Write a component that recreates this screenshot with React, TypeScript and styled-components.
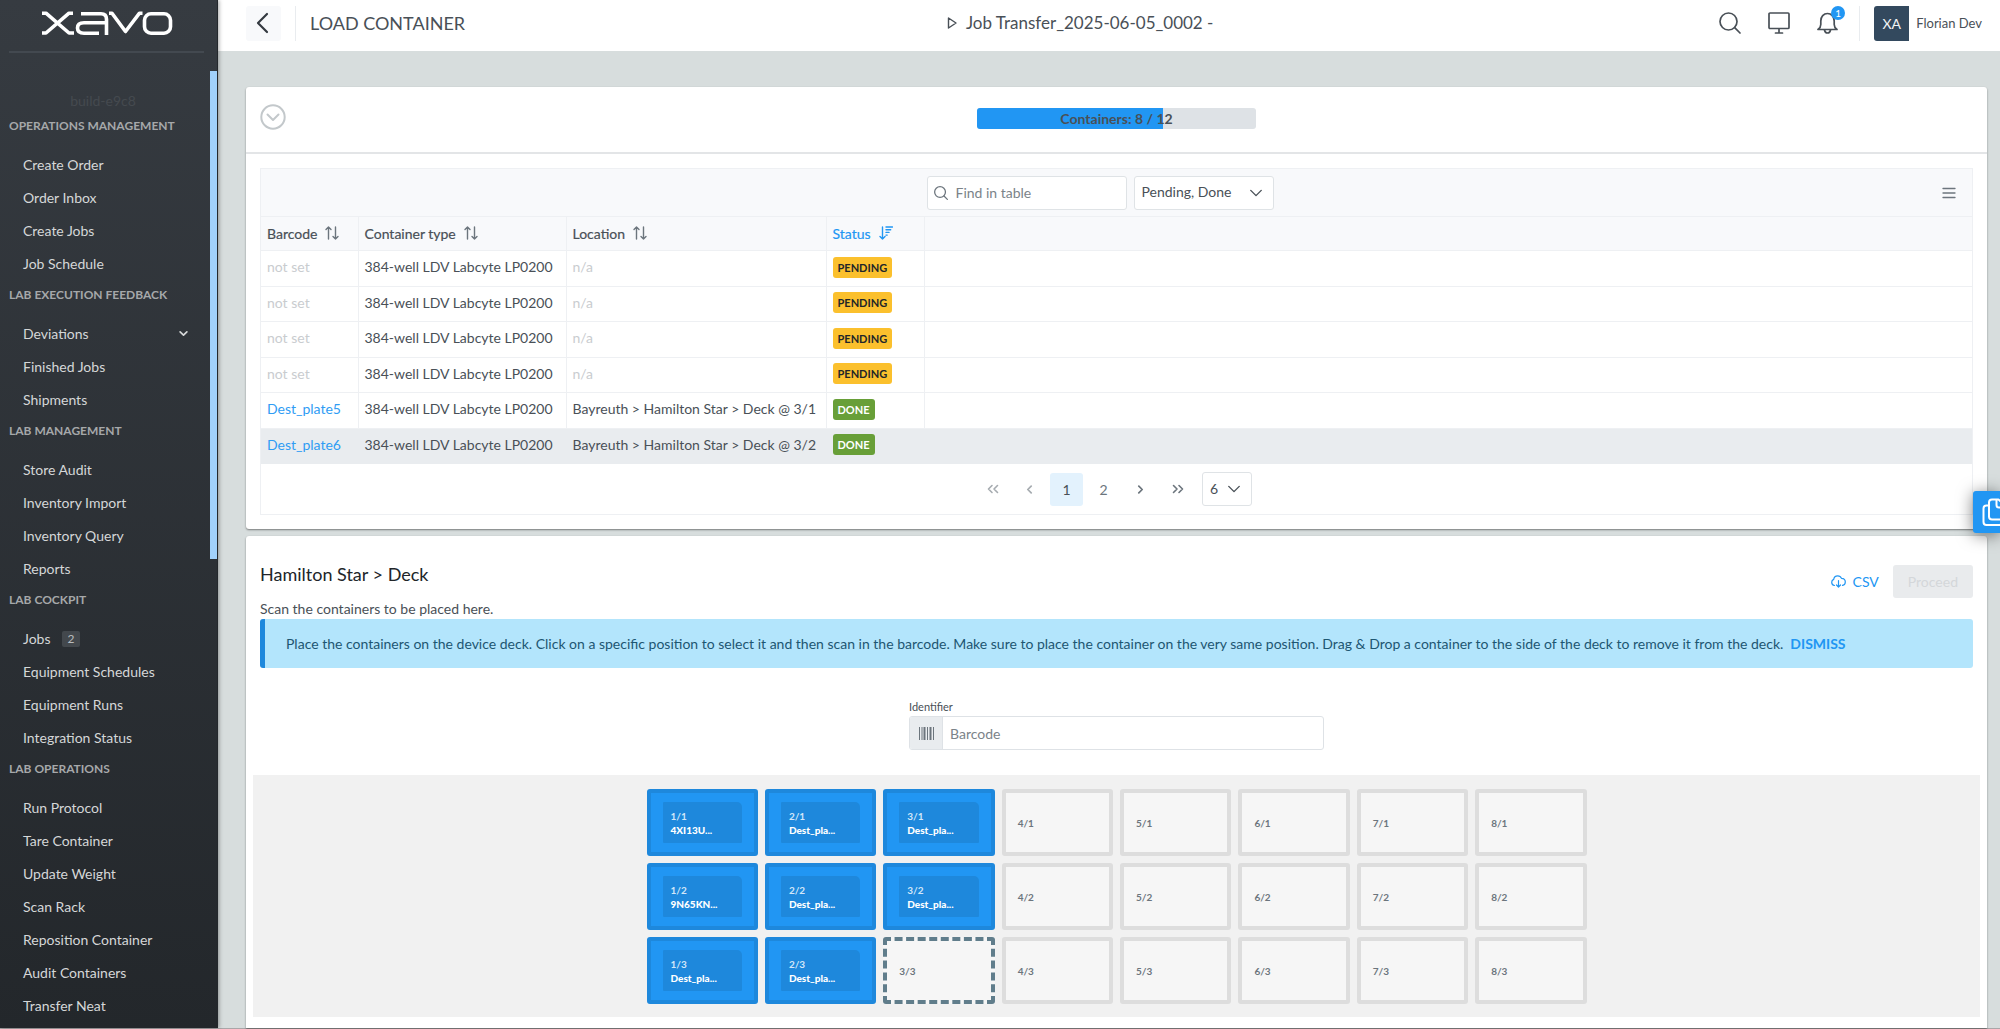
import React from 'react';
import styled, { createGlobalStyle } from 'styled-components';

const Global = createGlobalStyle`
  *, *::before, *::after { box-sizing: border-box; }
  body { margin: 0; background: #d7dddd; }
  body, button, input, select {
    font-family: Lato, "Open Sans", sans-serif;
    font-size: 14px;
    color: #495057;
  }
  h1, h2, h3, p, ul { margin: 0; padding: 0; font-weight: 400; }
  ul { list-style: none; }
  a { text-decoration: none; color: inherit; }
  button { background: none; border: 0; padding: 0; cursor: pointer; }
  svg { display: block; flex: none; }
`;

/* ---------- shell ---------- */

const Shell = styled.div`
  display: grid;
  grid-template-columns: 218px minmax(0, 1fr);
  min-height: 100vh;
  border-bottom: 1px solid #a9a6a8;
`;

const Sidebar = styled.aside`
  display: flex;
  flex-direction: column;
  background: linear-gradient(#363b41, #23272b);
  border-right: 1px solid #24282c;
  box-shadow: 1px 0 4px rgba(0, 0, 0, 0.35);
  z-index: 1;
`;

const Brand = styled.a`
  display: flex;
  justify-content: center;
  padding: 11px 0 16px;
  margin: 0 13px 18px 9px;
  border-bottom: 2px solid #434950;
`;

const MenuArea = styled.div`
  flex: 1;
  display: flex;
`;

const Menu = styled.nav`
  flex: 1;
  padding-top: 20px;
`;

const Build = styled.p`
  text-align: center;
  line-height: 20px;
  padding-right: 4px;
  color: #454a4f;
`;

const ScrollTrack = styled.div`
  width: 7px;
`;

const ScrollThumb = styled.div`
  height: 51%;
  background: #a1d1fb;
`;

const GroupTitle = styled.h3`
  padding: 0 9px 8px;
  font-size: 12px;
  font-weight: 700;
  line-height: 29px;
  color: #a6a8aa;
`;

const MenuLink = styled.a`
  display: flex;
  align-items: center;
  gap: 11px;
  height: 33px;
  padding: 0 22px 0 23px;
  color: #d5d7d8;

  svg { margin-left: auto; }
`;

const Count = styled.span`
  padding: 0 6px;
  border-radius: 2px;
  font-size: 12px;
  line-height: 16px;
  background: #43484d;
  color: #b9bcbe;
`;

const Content = styled.div`
  display: flex;
  flex-direction: column;
  min-width: 0;
`;

const TopBar = styled.header`
  display: flex;
  align-items: center;
  justify-content: space-between;
  height: 51px;
  padding: 0 18px 5px 28px;
  background: #fff;
`;

const TopLeft = styled.div`
  display: flex;
  align-items: center;
  gap: 14px;
`;

const BackButton = styled.button`
  display: grid;
  place-items: center;
  width: 35px;
  height: 35px;
  padding-right: 3px;
  border-radius: 3px;
  background: #f8f9fb;
`;

const Rule = styled.span`
  width: 1px;
  height: 35px;
  background: #e9ecef;
`;

const PageTitle = styled.h1`
  font-size: 18px;
  line-height: 24px;
`;

const JobTitle = styled.div`
  display: flex;
  align-items: center;
  gap: 9px;
  padding-right: 24px;
  font-size: 17px;
  line-height: 24px;
`;

const TopRight = styled.div`
  display: flex;
  align-items: center;
  gap: 27px;
`;

const IconButton = styled.button`
  position: relative;
  display: grid;
  place-items: center;
`;

const Alert = styled.span`
  position: absolute;
  top: -6px;
  right: -7px;
  width: 14px;
  border-radius: 7px;
  font-size: 10px;
  line-height: 14px;
  text-align: center;
  background: #2196f3;
  color: #fff;
`;

const User = styled.div`
  display: flex;
  align-items: center;
  gap: 7px;
  font-size: 13px;

  ${Rule} { margin: 0 7px 0 -6px; }
`;

const Avatar = styled.span`
  width: 35px;
  border-radius: 3px 0 0 3px;
  font-size: 14px;
  line-height: 35px;
  text-align: center;
  background: #33495e;
  color: #f1f3f5;
`;

const Main = styled.main`
  flex: 1;
  display: flex;
  flex-direction: column;
  gap: 7px;
  padding: 36px 13px 0 28px;
`;

const Card = styled.section`
  background: #fff;
  border-radius: 3px;
  box-shadow: 0 1px 2px rgba(0, 0, 0, 0.45);
`;

const DeckCard = styled(Card)`
  flex: 1;
  display: flex;
  flex-direction: column;
  padding: 29px 7px 11px;
  border-radius: 3px 3px 0 0;
`;

/* ---------- container list ---------- */

const CardHeader = styled.div`
  display: grid;
  grid-template-columns: 1fr 279px 1fr;
  align-items: center;
  height: 67px;
  padding: 0 14px 2px;
  border-bottom: 2px solid #e3e5e7;
`;

const Collapse = styled.button`
  justify-self: start;
  padding-bottom: 4px;
`;

const Progress = styled.div`
  display: grid;
  border-radius: 3px;
  overflow: hidden;
  background: #dee2e6;

  > * { grid-area: 1 / 1; }
`;

const ProgressFill = styled.div`
  background: #2196f3;
`;

const ProgressLabel = styled.span`
  font-weight: 700;
  line-height: 21px;
  text-align: center;
`;

const TableFrame = styled.div`
  margin: 14px;
  border: 1px solid #eef0f3;
`;

const Toolbar = styled.div`
  display: grid;
  grid-template-columns: 1fr 33px;
  align-items: center;
  height: 47px;
  background: #f8f9fb;
`;

const ToolbarButton = styled.button`
  padding: 0 3px;
`;

const Filters = styled.div`
  display: flex;
  justify-content: center;
  gap: 7px;
`;

const SearchBox = styled.label`
  display: flex;
  align-items: center;
  gap: 8px;
  width: 200px;
  height: 34px;
  padding: 0 6px;
  border: 1px solid #dfe3e6;
  border-radius: 3px;
  background: #fff;
  color: #6c757d;
`;

const BareInput = styled.input`
  flex: 1;
  min-width: 0;
  padding: 0;
  border: 0;
  outline: 0;
  background: none;

  &::placeholder { color: #7b8389; opacity: 1; }
`;

const SelectBox = styled.label<{ $width: number }>`
  display: grid;
  align-items: center;
  width: ${p => p.$width}px;
  height: 34px;
  border: 1px solid #dfe3e6;
  border-radius: 3px;
  background: #fff;

  > * { grid-area: 1 / 1; }
  > svg { justify-self: end; margin-right: 10px; pointer-events: none; }
`;

const BareSelect = styled.select`
  appearance: none;
  width: 100%;
  height: 100%;
  padding: 0 7px 2px;
  border: 0;
  outline: 0;
  background: none;
`;

const Table = styled.table`
  width: 100%;
  height: 248px;
  border-collapse: collapse;
`;

const Th = styled.th<{ $width?: number; $active?: boolean }>`
  width: ${p => (p.$width ? p.$width + 'px' : 'auto')};
  height: 34px;
  padding: 0 6px 1px;
  border: 1px solid #eef0f3;
  border-left-width: 0;
  font-weight: 400;
  text-align: left;
  background: #f8f9fb;
  color: ${p => (p.$active ? '#2196f3' : '#495057')};

  &:last-child { border-right-width: 0; }
`;

const SortButton = styled.button`
  display: flex;
  align-items: center;
  gap: 8px;
  color: inherit;
  font-weight: 400;
  -webkit-text-stroke: 0.2px;
`;

const Row = styled.tr<{ $selected?: boolean }>`
  background: ${p => (p.$selected ? '#e9ecef' : '#fff')};

  td { border-color: ${p => (p.$selected ? '#e9ecef' : '#eef0f3')}; }
`;

const Td = styled.td<{ $muted?: boolean }>`
  padding: 0 6px 2px;
  border-style: solid;
  border-width: 0 1px 1px 0;
  line-height: 20px;
  white-space: nowrap;
  color: ${p => (p.$muted ? '#c9cccf' : '#495057')};

  &:last-child { border-right-width: 0; }
`;

const BlueLink = styled.a`
  color: #2f9cf4;
`;

const Tag = styled.span<{ $done?: boolean }>`
  display: block;
  width: fit-content;
  padding: 0 5px;
  border-radius: 3px;
  font-size: 11px;
  font-weight: 700;
  line-height: 21px;
  background: ${p => (p.$done ? '#689f38' : '#fbc02d')};
  color: ${p => (p.$done ? '#fff' : '#212529')};
`;

const Pager = styled.nav`
  display: flex;
  align-items: center;
  justify-content: center;
  gap: 4px;
  height: 50px;
  padding-right: 5px;
`;

const PageButton = styled.button<{ $current?: boolean }>`
  display: grid;
  place-items: center;
  width: 33px;
  height: 33px;
  border-radius: 3px;
  background: ${p => (p.$current ? '#e3f2fd' : 'transparent')};
  color: ${p => (p.$current ? '#495057' : '#6c757d')};

  &:disabled { opacity: 0.6; }
`;

const PageSize = styled.div`
  margin-left: 4px;
`;

/* ---------- deck ---------- */

const DeckHead = styled.div`
  display: flex;
  justify-content: space-between;
  align-items: flex-start;
  padding: 0 7px;
`;

const DeckTitle = styled.h2`
  font-size: 18px;
  line-height: 18px;
  color: #212529;
`;

const Actions = styled.div`
  display: flex;
  gap: 14px;
`;

const TextButton = styled.button`
  display: flex;
  align-items: center;
  gap: 7px;
  color: #2196f3;
`;

const Proceed = styled.button`
  padding: 0 15px;
  border-radius: 3px;
  line-height: 33px;
  background: #e9ebed;
  color: #d4d7da;
`;

const Hint = styled.p`
  margin-top: 1px;
  padding: 0 7px;
  line-height: 20px;
`;

const Notice = styled.div`
  display: flex;
  align-items: center;
  gap: 7px;
  min-height: 49px;
  margin: 0 7px;
  padding: 14px 14px 14px 21px;
  border-left: 5px solid #1e88dc;
  border-radius: 3px;
  line-height: 21px;
  background: #b3e5fc;
  color: #1d5672;
`;

const Dismiss = styled.button`
  font-weight: 700;
  color: #2196f3;
`;

const Identifier = styled.div`
  width: 415px;
  max-width: 100%;
  margin: 32px auto 25px;
`;

const FieldLabel = styled.label`
  display: block;
  padding-bottom: 2px;
  font-size: 11px;
  line-height: 14px;
`;

const InputGroup = styled.div`
  display: flex;
  height: 34px;
  border: 1px solid #dee2e6;
  border-radius: 3px;
  overflow: hidden;

  input { padding: 0 7px; }
`;

const Addon = styled.span`
  display: grid;
  place-items: center;
  width: 33px;
  border-right: 1px solid #dee2e6;
  background: #e9ecef;
`;

const DeckArea = styled.div`
  padding: 14px 14px 13px;
  background: #f1f1f1;
`;

const Slots = styled.ul`
  display: grid;
  grid-template-columns: repeat(8, minmax(0, 1fr));
  grid-auto-rows: 67px;
  gap: 7px;
  max-width: 940px;
  margin: 0 auto;
`;

const Slot = styled.li<{ $filled?: boolean; $active?: boolean }>`
  display: grid;
  align-items: center;
  padding: 9px 12px;
  border: 4px ${p => (p.$active ? 'dashed #607d8b' : p.$filled ? 'solid #1e88dc' : 'solid #dddddd')};
  border-radius: 3px;
  font-size: 10px;
  line-height: 14px;
  background: ${p => (p.$filled ? '#2196f3' : '#f6f6f6')};
  color: #6c757d;
  font-weight: 700;
`;

const Plate = styled.div`
  align-self: stretch;
  display: flex;
  flex-direction: column;
  justify-content: center;
  padding: 0 8px;
  border-radius: 1px 5px 1px 1px;
  background: #1e88dc;
  color: #d2e7f9;
`;

const PlateName = styled.strong`
  color: #fff;
  white-space: nowrap;
`;

const Floating = styled.button`
  position: fixed;
  top: 491px;
  right: 0;
  width: 27px;
  height: 42px;
  padding-left: 9px;
  overflow: hidden;
  border-radius: 3px 0 0 3px;
  box-shadow: 0 2px 16px rgba(0, 0, 0, 0.5);
  background: #2196f3;
  color: #fff;
  z-index: 2;
`;

/* ---------- icons ---------- */

const Logo = () => (
  <svg width="132" height="24" viewBox="0 0 132 24" fill="none" stroke="#fff" strokeWidth="3.6" aria-label="xavo">
    <path d="M1 2.2h4L28 22h5M32 2.2h-4L5 22H1" strokeLinejoin="round" />
    <path d="M40 2.8h20q5.500 0 5.500 5.500V24M65 11.800H43q-6.500 0-6.500 5.200t6.500 5.200h15" />
    <path d="M68 2.200h3L84.500 20.500 98.500 2.200h3" strokeLinejoin="round" />
    <rect x="103.500" y="2.800" width="26" height="19.400" rx="6.500" />
  </svg>
);

type ChevronProps = { size: number; dir?: 'down' | 'left' | 'right'; weight?: number };

const chevronPath = { down: 'M2 5l6 6 6-6', left: 'M11 2L5 8l6 6', right: 'M5 2l6 6-6 6' };

const Chevron = ({ size, dir = 'down', weight = 1.6 }: ChevronProps) => (
  <svg width={size} height={size} viewBox="0 0 16 16" fill="none" stroke="currentColor" strokeWidth={weight} strokeLinecap="round" strokeLinejoin="round">
    <path d={chevronPath[dir]} />
  </svg>
);

const DoubleChevron = ({ dir }: { dir: 'left' | 'right' }) => (
  <svg width="12" height="12" viewBox="0 0 12 12" fill="none" stroke="currentColor" strokeWidth="1.600" strokeLinecap="round" strokeLinejoin="round">
    <path d={dir === 'left' ? 'M5 2.500L1.500 6 5 9.500M10.500 2.500L7 6l3.500 3.500' : 'M1.500 2.500L5 6 1.500 9.500M7 2.500L10.500 6 7 9.500'} />
  </svg>
);

const BackIcon = () => (
  <svg width="14" height="22" viewBox="0 0 14 22" fill="none" stroke="#343a40" strokeWidth="2.200" strokeLinecap="round" strokeLinejoin="round">
    <path d="M12 2L3 11l9 9" />
  </svg>
);

const PlayIcon = () => (
  <svg width="10" height="12" viewBox="0 0 10 12" fill="none" stroke="currentColor" strokeWidth="1.400" strokeLinejoin="round">
    <path d="M1.500 1l7.500 5-7.500 5z" />
  </svg>
);

const SearchIcon = ({ size, weight }: { size: number; weight: number }) => (
  <svg width={size} height={size} viewBox="0 0 22 22" fill="none" stroke="currentColor" strokeWidth={weight} strokeLinecap="round">
    <circle cx="9.500" cy="9.500" r="8.500" />
    <path d="M15.700 15.700L21 21" />
  </svg>
);

const MonitorIcon = () => (
  <svg width="22" height="22" viewBox="0 0 22 22" fill="none" stroke="currentColor" strokeWidth="1.700" strokeLinecap="round" strokeLinejoin="round">
    <rect x="1" y="1" width="20" height="15.500" rx="1" />
    <path d="M11 17v4M7.500 21h7" />
  </svg>
);

const BellIcon = () => (
  <svg width="21" height="22" viewBox="0 0 21 22" fill="none" stroke="currentColor" strokeWidth="1.700" strokeLinecap="round" strokeLinejoin="round">
    <path d="M1 17.500h19c-1.800-1.300-2.800-2.800-2.800-5V9c0-4.200-2.800-7.500-6.700-7.500S3.800 4.800 3.800 9v3.500c0 2.200-1 3.700-2.800 5z" />
    <path d="M7.500 18c.3 1.800 1.400 3 3 3s2.700-1.200 3-3" />
  </svg>
);

const CircleDown = () => (
  <svg width="26" height="26" viewBox="0 0 26 26" fill="none" stroke="#c3c8cb" strokeWidth="2" strokeLinecap="round" strokeLinejoin="round">
    <circle cx="13" cy="13" r="11.700" />
    <path d="M7.500 10.500L13 16l5.500-5.500" />
  </svg>
);

const SortIcon = () => (
  <svg width="14" height="14" viewBox="0 0 14 14" fill="none" stroke="#6c757d" strokeWidth="1.400" strokeLinecap="round" strokeLinejoin="round">
    <path d="M3.500 13V1M1 3.500L3.500 1 6 3.500M10.500 1v12M8 10.500l2.500 2.500 2.500-2.500" />
  </svg>
);

const SortDownIcon = () => (
  <svg width="14" height="14" viewBox="0 0 14 14" fill="none" stroke="currentColor" strokeWidth="1.400" strokeLinecap="round" strokeLinejoin="round">
    <path d="M3.500 1v12M1 10.500L3.500 13 6 10.500M7 1h6.500M7 3.700h4.700M7 6.400h3M7 9.100h1.200" />
  </svg>
);

const MenuIcon = () => (
  <svg width="14" height="12" viewBox="0 0 14 12" stroke="#6c757d" strokeWidth="1.300" strokeLinecap="round">
    <path d="M1 1.500h12M1 6h12M1 10.500h12" />
  </svg>
);

const CloudIcon = () => (
  <svg width="15" height="13" viewBox="0 0 15 13" fill="none" stroke="currentColor" strokeWidth="1.200" strokeLinecap="round" strokeLinejoin="round">
    <path d="M3.500 10.500C1.800 10.300.7 9 .7 7.300c0-1.400.9-2.500 2-2.900C3 2.200 4.600.8 6.700.8c1.800 0 3.200 1 3.800 2.600 2.200.1 3.800 1.500 3.800 3.500 0 1.900-1.100 3.200-2.800 3.500" />
    <path d="M7.500 5.500v6.500M5.500 10l2 2 2-2" />
  </svg>
);

const BarcodeIcon = () => (
  <svg width="15" height="13" viewBox="0 0 15 13" stroke="#6c757d" strokeWidth="1">
    <path d="M.5 0v13M3 0v13M8.500 0v13M14.500 0v13" />
    <path d="M5.500 0v13M11.500 0v13" strokeWidth="2" />
  </svg>
);

const CopyIcon = () => (
  <svg width="28" height="29" viewBox="0 0 28 29" fill="none" stroke="currentColor" strokeWidth="2" strokeLinejoin="round">
    <path d="M6.500 7.500H4.500Q1.500 7.500 1.500 10.500V24q0 3 3 3H17q3 0 3-3v-2" />
    <path d="M10 1.500h6.500L25 9.500V18.500q0 3-3 3H10q-3 0-3-3V4.500q0-3 3-3z" />
    <path d="M14.500 1.500V7q0 2.500 2.500 2.500h8" />
  </svg>
);

/* ---------- data ---------- */

type Item = { label: string; count?: number; nested?: boolean };

const groups: { title: string; items: Item[] }[] = [
  { title: 'OPERATIONS MANAGEMENT', items: [{ label: 'Create Order' }, { label: 'Order Inbox' }, { label: 'Create Jobs' }, { label: 'Job Schedule' }] },
  { title: 'LAB EXECUTION FEEDBACK', items: [{ label: 'Deviations', nested: true }, { label: 'Finished Jobs' }, { label: 'Shipments' }] },
  { title: 'LAB MANAGEMENT', items: [{ label: 'Store Audit' }, { label: 'Inventory Import' }, { label: 'Inventory Query' }, { label: 'Reports' }] },
  { title: 'LAB COCKPIT', items: [{ label: 'Jobs', count: 2 }, { label: 'Equipment Schedules' }, { label: 'Equipment Runs' }, { label: 'Integration Status' }] },
  {
    title: 'LAB OPERATIONS',
    items: [
      { label: 'Run Protocol' }, { label: 'Tare Container' }, { label: 'Update Weight' }, { label: 'Scan Rack' },
      { label: 'Reposition Container' }, { label: 'Audit Containers' }, { label: 'Transfer Neat' },
    ],
  },
];

const containerType = '384-well LDV Labcyte LP0200';

const rows: { barcode?: string; location?: string; selected?: boolean }[] = [
  {}, {}, {}, {},
  { barcode: 'Dest_plate5', location: 'Bayreuth > Hamilton Star > Deck @ 3/1' },
  { barcode: 'Dest_plate6', location: 'Bayreuth > Hamilton Star > Deck @ 3/2', selected: true },
];

const plates: Record<string, string> = {
  '1/1': '4XI13U...', '2/1': 'Dest_pla...', '3/1': 'Dest_pla...',
  '1/2': '9N65KN...', '2/2': 'Dest_pla...', '3/2': 'Dest_pla...',
  '1/3': 'Dest_pla...', '2/3': 'Dest_pla...',
};

const activeSlot = '3/3';
const slots = [1, 2, 3].flatMap(r => [1, 2, 3, 4, 5, 6, 7, 8].map(c => `${c}/${r}`));

const loaded = 8;
const total = 12;

/* ---------- page ---------- */

const SideMenu = () => (
  <Sidebar>
    <Brand href="#"><Logo /></Brand>
    <MenuArea>
      <Menu>
        <Build>build-e9c8</Build>
        {groups.map(group => (
          <React.Fragment key={group.title}>
            <GroupTitle>{group.title}</GroupTitle>
            <ul>
              {group.items.map(item => (
                <li key={item.label}>
                  <MenuLink href="#">
                    {item.label}
                    {item.count && <Count>{item.count}</Count>}
                    {item.nested && <Chevron size={9} weight={3} />}
                  </MenuLink>
                </li>
              ))}
            </ul>
          </React.Fragment>
        ))}
      </Menu>
      <ScrollTrack><ScrollThumb /></ScrollTrack>
    </MenuArea>
  </Sidebar>
);

const Header = () => (
  <TopBar>
    <TopLeft>
      <BackButton aria-label="Back"><BackIcon /></BackButton>
      <Rule />
      <PageTitle>LOAD CONTAINER</PageTitle>
    </TopLeft>
    <JobTitle><PlayIcon />Job Transfer_2025-06-05_0002 -</JobTitle>
    <TopRight>
      <IconButton aria-label="Search"><SearchIcon size={22} weight={1.7} /></IconButton>
      <IconButton aria-label="Display"><MonitorIcon /></IconButton>
      <IconButton aria-label="Notifications"><BellIcon /><Alert>1</Alert></IconButton>
      <User><Rule /><Avatar>XA</Avatar>Florian Dev</User>
    </TopRight>
  </TopBar>
);

const ContainerCard = () => (
  <Card>
    <CardHeader>
      <Collapse aria-label="Collapse"><CircleDown /></Collapse>
      <Progress role="progressbar" aria-valuenow={loaded} aria-valuemax={total}>
        <ProgressFill style={{ width: `${(loaded / total) * 100}%` }} />
        <ProgressLabel>Containers: {loaded} / {total}</ProgressLabel>
      </Progress>
    </CardHeader>
    <TableFrame>
      <Toolbar>
        <Filters>
          <SearchBox>
            <SearchIcon size={14} weight={2} />
            <BareInput type="text" placeholder="Find in table" aria-label="Find in table" />
          </SearchBox>
          <SelectBox $width={140}>
            <BareSelect aria-label="Status filter"><option>Pending, Done</option></BareSelect>
            <Chevron size={14} />
          </SelectBox>
        </Filters>
        <ToolbarButton aria-label="Table menu"><MenuIcon /></ToolbarButton>
      </Toolbar>
      <Table>
        <thead>
          <tr>
            <Th $width={97}><SortButton>Barcode <SortIcon /></SortButton></Th>
            <Th $width={208}><SortButton>Container type <SortIcon /></SortButton></Th>
            <Th $width={260}><SortButton>Location <SortIcon /></SortButton></Th>
            <Th $width={98} $active><SortButton>Status <SortDownIcon /></SortButton></Th>
            <Th />
          </tr>
        </thead>
        <tbody>
          {rows.map((row, i) => (
            <Row key={i} $selected={row.selected}>
              <Td $muted={!row.barcode}>{row.barcode ? <BlueLink href="#">{row.barcode}</BlueLink> : 'not set'}</Td>
              <Td>{containerType}</Td>
              <Td $muted={!row.location}>{row.location ?? 'n/a'}</Td>
              <Td><Tag $done={!!row.barcode}>{row.barcode ? 'DONE' : 'PENDING'}</Tag></Td>
              <Td />
            </Row>
          ))}
        </tbody>
      </Table>
      <Pager aria-label="Pages">
        <PageButton disabled aria-label="First page"><DoubleChevron dir="left" /></PageButton>
        <PageButton disabled aria-label="Previous page"><Chevron size={9} dir="left" weight={3} /></PageButton>
        <PageButton $current>1</PageButton>
        <PageButton>2</PageButton>
        <PageButton aria-label="Next page"><Chevron size={9} dir="right" weight={3} /></PageButton>
        <PageButton aria-label="Last page"><DoubleChevron dir="right" /></PageButton>
        <PageSize>
          <SelectBox $width={50}>
            <BareSelect aria-label="Rows per page"><option>6</option></BareSelect>
            <Chevron size={14} />
          </SelectBox>
        </PageSize>
      </Pager>
    </TableFrame>
  </Card>
);

const Deck = () => (
  <DeckCard>
    <DeckHead>
      <DeckTitle>Hamilton Star &gt; Deck</DeckTitle>
      <Actions>
        <TextButton><CloudIcon />CSV</TextButton>
        <Proceed disabled>Proceed</Proceed>
      </Actions>
    </DeckHead>
    <Hint>Scan the containers to be placed here.</Hint>
    <Notice>
      <span>
        Place the containers on the device deck. Click on a specific position to select it and then scan in the barcode.
        Make sure to place the container on the very same position. Drag &amp; Drop a container to the side of the deck to
        remove it from the deck.
      </span>
      <Dismiss>DISMISS</Dismiss>
    </Notice>
    <Identifier>
      <FieldLabel htmlFor="identifier">Identifier</FieldLabel>
      <InputGroup>
        <Addon><BarcodeIcon /></Addon>
        <BareInput id="identifier" type="text" placeholder="Barcode" />
      </InputGroup>
    </Identifier>
    <DeckArea>
      <Slots>
        {slots.map(slot => (
          <Slot key={slot} $filled={slot in plates} $active={slot === activeSlot}>
            {slot in plates ? <Plate>{slot}<PlateName>{plates[slot]}</PlateName></Plate> : slot}
          </Slot>
        ))}
      </Slots>
    </DeckArea>
  </DeckCard>
);

export default function App() {
  return (
    <>
      <Global />
      <Shell>
        <SideMenu />
        <Content>
          <Header />
          <Main>
            <ContainerCard />
            <Deck />
          </Main>
        </Content>
      </Shell>
      <Floating aria-label="Copy"><CopyIcon /></Floating>
    </>
  );
}
